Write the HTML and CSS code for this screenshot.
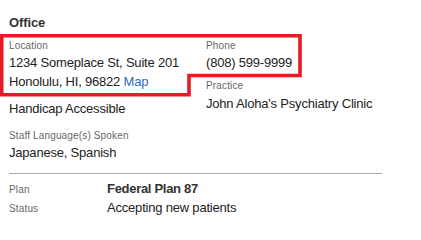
FILE: index.html
```html
<!DOCTYPE html>
<html>
<head>
<meta charset="utf-8">
<link rel="stylesheet" href="styles.css">
</head>
<body>
<div class="page">
  <h2 class="heading">Office</h2>
  <div class="office-grid">
    <div class="col col-left">
      <div class="field">
        <div class="label">Location</div>
        <div class="value">1234 Someplace St, Suite 201</div>
        <div class="value">Honolulu, HI, 96822 <a class="link" href="#">Map</a></div>
      </div>
      <div class="field field-access">
        <div class="value">Handicap Accessible</div>
      </div>
    </div>
    <div class="col col-right">
      <div class="field">
        <div class="label">Phone</div>
        <div class="value">(808) 599-9999</div>
      </div>
      <div class="field field-practice">
        <div class="label">Practice</div>
        <div class="value">John Aloha's Psychiatry Clinic</div>
      </div>
    </div>
  </div>
  <div class="field field-lang">
    <div class="label">Staff Language(s) Spoken</div>
    <div class="value">Japanese, Spanish</div>
  </div>
  <hr class="divider">
  <div class="plan-table">
    <div class="plan-row">
      <div class="plan-label">Plan</div>
      <div class="plan-value plan-strong">Federal Plan 87</div>
    </div>
    <div class="plan-row">
      <div class="plan-label">Status</div>
      <div class="plan-value">Accepting new patients</div>
    </div>
  </div>
  <svg class="highlight" width="421" height="222" viewBox="0 0 421 222">
    <polygon points="1.75,35.75 300,35.75 300,75.5 189,75.5 189,94.75 1.75,94.75" fill="none" stroke="#e51c24" stroke-width="3.6" stroke-linejoin="miter"/>
  </svg>
</div>
</body>
</html>
```

FILE: styles.css
```css
html, body {
  margin: 0;
  padding: 0;
  background: #ffffff;
}

.page {
  position: relative;
  width: 421px;
  height: 222px;
  overflow: hidden;
  padding: 14px 0 0 9px;
  box-sizing: border-box;
  font-family: "Liberation Sans", Arial, sans-serif;
  color: #222222;
}

.heading {
  margin: 0 0 6.5px 0;
  font-size: 13px;
  line-height: 18px;
  font-weight: bold;
  color: #333333;
  letter-spacing: -0.1px;
}

.office-grid {
  display: grid;
  grid-template-columns: 197px 1fr;
}

.label {
  font-size: 10px;
  line-height: 14px;
  color: #666666;
  letter-spacing: 0.15px;
}

.value {
  font-size: 13px;
  line-height: 19px;
  color: #222222;
  letter-spacing: -0.2px;
}

.link {
  color: #2a6fc0;
  text-decoration: none;
}

.field-access {
  margin-top: 8.5px;
}

.field-practice {
  margin-top: 7.5px;
}

.field-practice .value {
  margin-top: 0.5px;
}

.field-lang {
  margin-top: 11px;
}

.divider {
  width: 373px;
  margin: 11px 0 0 0;
  border: 0;
  border-top: 1px solid #aaaaaa;
  height: 0;
}

.plan-table {
  margin-top: 5px;
}

.plan-row {
  display: flex;
  height: 19px;
  align-items: center;
}

.plan-label {
  width: 98px;
  font-size: 10px;
  line-height: 19px;
  color: #666666;
  padding-top: 1px;
  box-sizing: border-box;
  letter-spacing: 0.15px;
}

.plan-value {
  font-size: 13px;
  line-height: 19px;
  color: #222222;
  letter-spacing: -0.2px;
}

.plan-strong {
  font-weight: bold;
  color: #333333;
  letter-spacing: -0.3px;
}

.highlight {
  position: absolute;
  left: 0;
  top: 0;
  pointer-events: none;
}
```
